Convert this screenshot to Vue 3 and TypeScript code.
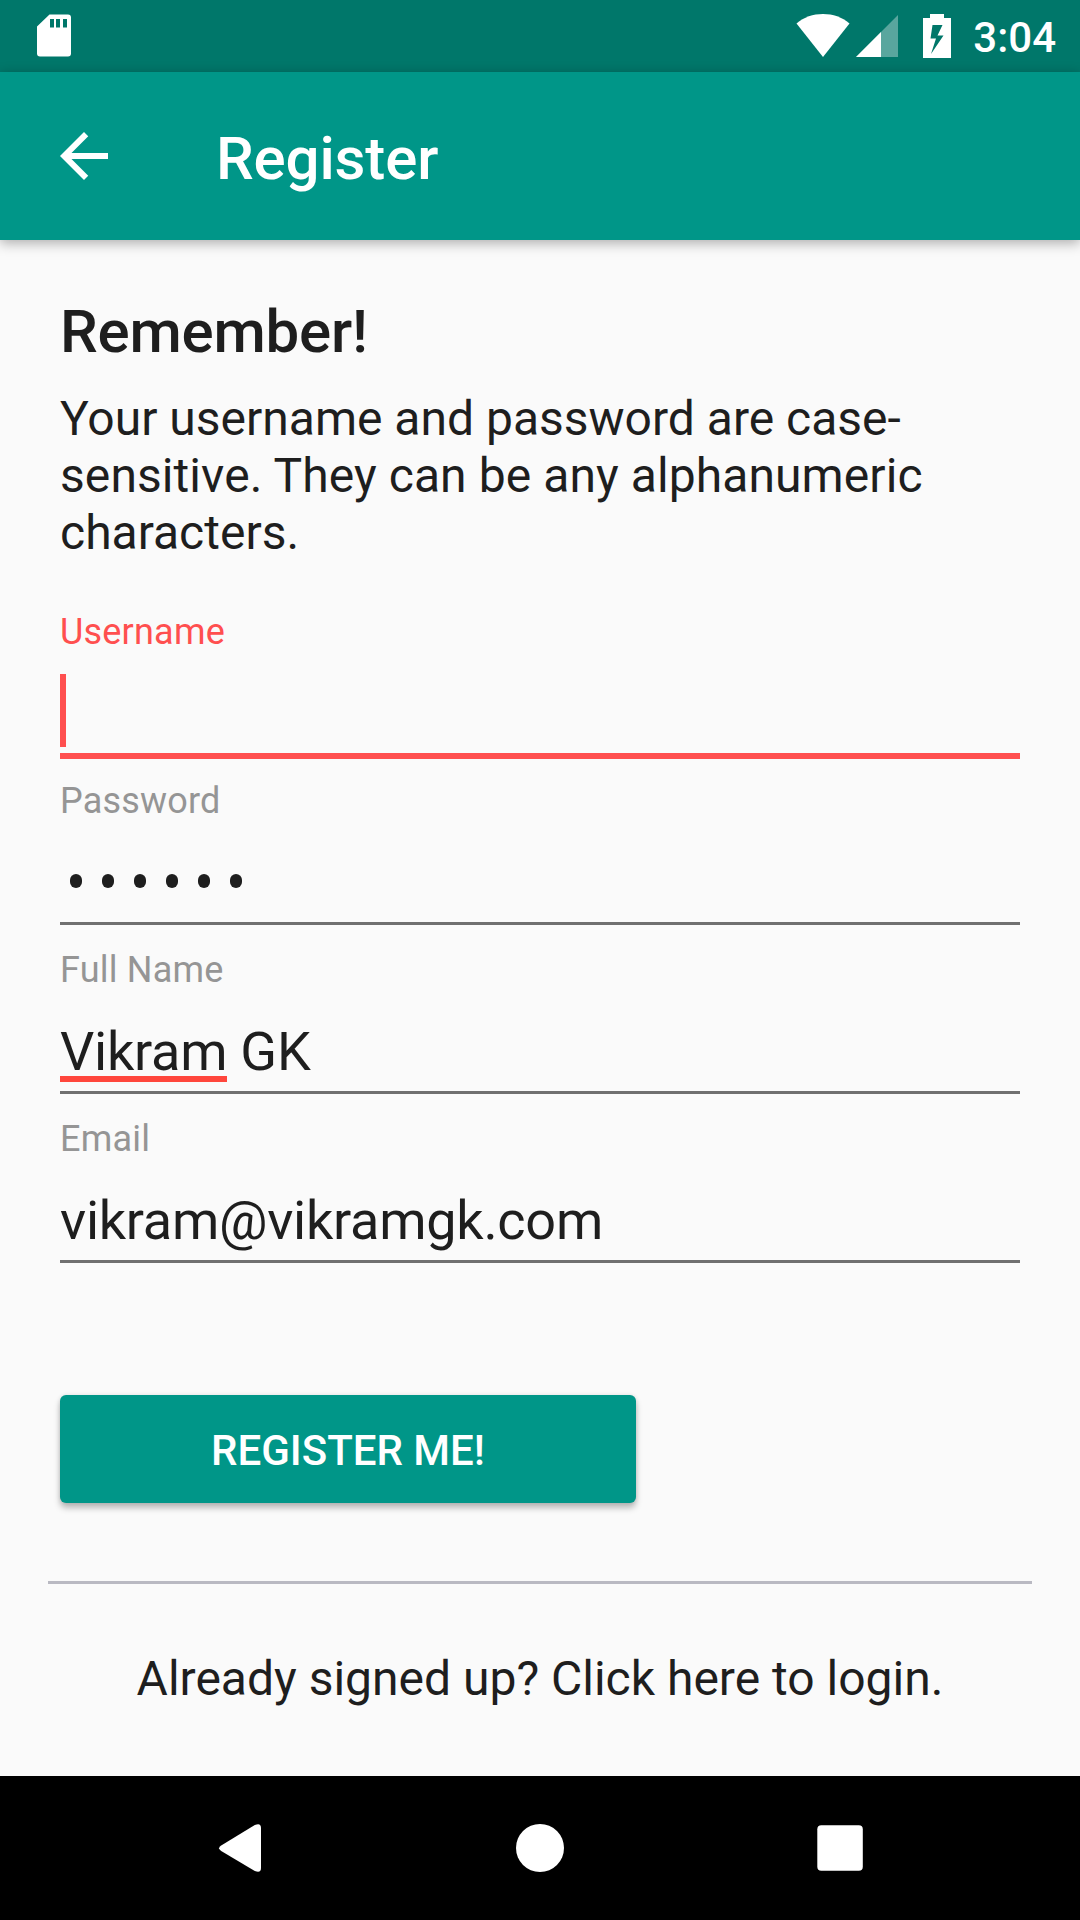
<script setup lang="ts">
import { ref } from 'vue'

interface Field {
  id: string
  label: string
  kind: 'empty' | 'password' | 'name' | 'text'
  value: string
}

const fields = ref<Field[]>([
  { id: 'username', label: 'Username', kind: 'empty', value: '' },
  { id: 'password', label: 'Password', kind: 'password', value: '123456' },
  { id: 'fullname', label: 'Full Name', kind: 'name', value: 'Vikram GK' },
  { id: 'email', label: 'Email', kind: 'text', value: 'vikram@vikramgk.com' },
])
const focused = ref('username')
</script>

<template>
  <div class="screen">
    <header class="status-bar">
      <svg class="sd" width="34" height="43" viewBox="0 0 34 43">
        <path fill="#fff" fill-rule="evenodd" d="M12.5 0.5H31Q34 .5 34 3.5V39.5Q34 42.5 31 42.5H3Q0 42.5 0 39.5V12.5ZM13 5V13.5H17V5ZM19 5V13.5H23V5ZM26 5V13.5H30V5Z" />
      </svg>
      <div class="status-right">
        <svg class="wifi" width="54" height="43" viewBox="0 0 54 43">
          <path fill="#fff" d="M0.5 9.5C8 3 17 0 27 0S46 3 53.5 9.5L27 43Z" />
        </svg>
        <svg class="signal" width="42" height="42" viewBox="0 0 42 42">
          <path fill="#fff" fill-opacity=".35" d="M42 0V42H0Z" />
          <path fill="#fff" d="M25 17V42H0Z" />
        </svg>
        <svg class="battery" width="28" height="44" viewBox="0 0 28 44">
          <path fill="#fff" fill-rule="evenodd" d="M7 0H21V4H28V44H0V4H7ZM9.5 11L7.5 24.5H13L8 40L20.5 21.5H14.5L19.5 11Z" />
        </svg>
        <span class="clock">3:04</span>
      </div>
    </header>

    <nav class="app-bar">
      <svg class="back" width="72" height="72" viewBox="0 0 24 24">
        <path fill="#fff" d="M20 11H7.83l5.59-5.59L12 4l-8 8 8 8 1.41-1.41L7.83 13H20v-2z" />
      </svg>
      <h1 class="title">Register</h1>
    </nav>

    <main class="content">
      <h2 class="heading">Remember!</h2>
      <p class="intro">Your username and password are case-<br /><span class="wide">sensitive. They can be any alphanumeric</span><br />characters.</p>

      <form class="form" @submit.prevent>
        <div v-for="f in fields" :key="f.id" class="field" :class="{ active: f.id === focused }" @click="focused = f.id">
          <label class="label">{{ f.label }}</label>
          <div class="value">
            <span v-if="f.kind === 'empty'" class="cursor"></span>
            <span v-else-if="f.kind === 'password'" class="dots">
              <i v-for="n in f.value.length" :key="n" class="dot"></i>
            </span>
            <template v-else-if="f.kind === 'name'"><span class="misspelt">{{ f.value.split(' ')[0] }}</span>&nbsp;{{ f.value.split(' ')[1] }}</template>
            <template v-else>{{ f.value }}</template>
          </div>
        </div>
        <button class="submit" type="submit">REGISTER ME!</button>
      </form>

      <div class="divider"></div>
      <p class="login">Already signed up? Click here to login.</p>
    </main>

    <footer class="nav-bar">
      <svg width="48" height="48" viewBox="0 0 48 48">
        <path fill="#fff" d="M5.2 21.6 38.8 1Q45 -1.6 45 4V44Q45 49.6 38.8 47L5.2 27Q1 24.3 5.2 21.6Z" />
      </svg>
      <svg width="48" height="48" viewBox="0 0 48 48"><circle cx="24" cy="24" r="24" fill="#fff" /></svg>
      <svg width="48" height="48" viewBox="0 0 48 48"><rect x="1.3" y="1.3" width="45.5" height="45.5" rx="4" fill="#fff" /></svg>
    </footer>
  </div>
</template>

<style>
body {
  margin: 0;
  background: #fafafa;
}
</style>

<style scoped>
.screen {
  width: 1080px;
  height: 1920px;
  display: flex;
  flex-direction: column;
  overflow: hidden;
  background: #fafafa;
  color: #1e1e1e;
  font-family: Roboto, 'Liberation Sans', sans-serif;
}
h1, h2, p {
  margin: 0;
}
svg {
  display: block;
  flex: none;
}
.status-bar {
  height: 72px;
  flex: none;
  box-sizing: border-box;
  display: flex;
  justify-content: space-between;
  align-items: flex-start;
  padding: 14px 24px 0 37px;
  background: #00776a;
}
.status-right {
  display: flex;
  align-items: flex-start;
  color: #fff;
}
.signal {
  margin: 1px 25px 0 6px;
}
.clock {
  margin: 0 0 0 22px;
  font-size: 42px;
  line-height: 48px;
  font-weight: 500;
}
.app-bar {
  height: 168px;
  flex: none;
  display: flex;
  align-items: center;
  padding-left: 48px;
  background: #009688;
  color: #fff;
  position: relative;
  box-shadow: 0 3px 12px rgba(0, 0, 0, 0.32);
}
.title {
  margin: 5px 0 0 96px;
  font-size: 60px;
  line-height: 70px;
  font-weight: 500;
  letter-spacing: -0.15px;
}
.content {
  flex: 1;
  padding: 57px 60px 0;
}
.heading {
  font-size: 60px;
  line-height: 70px;
  font-weight: 500;
  letter-spacing: -0.2px;
}
.intro {
  margin-top: 23px;
  font-size: 48px;
  line-height: 57px;
  white-space: nowrap;
}
.wide {
  letter-spacing: 0.08px;
}
.form {
  margin-top: 50px;
}
.field {
  height: 169px;
}
.label {
  display: block;
  font-size: 36px;
  line-height: 42px;
  letter-spacing: 0.2px;
  color: #959595;
}
.value {
  height: 71px;
  padding-top: 29px;
  border-bottom: 3px solid #707070;
  font-size: 54px;
  line-height: 63px;
  letter-spacing: -0.27px;
  white-space: nowrap;
}
.active .label {
  color: #ff4f4f;
}
.active .value {
  border-bottom: 6px solid #ff4f4f;
}
.cursor {
  display: block;
  width: 6px;
  height: 73px;
  margin-top: -8px;
  background: #ff4f4f;
}
.dots {
  display: flex;
  gap: 20px;
  padding: 23px 0 0 10px;
}
.dot {
  width: 12px;
  height: 14px;
  border-radius: 6px;
  background: #1e1e1e;
}
.misspelt {
  display: inline-block;
  height: 56px;
  border-bottom: 6px solid #ff463c;
}
.submit {
  display: block;
  width: 576px;
  height: 108px;
  margin-top: 108px;
  padding: 2px 0 0;
  border: 0;
  border-radius: 6px;
  background: #009688;
  color: #fff;
  font-family: inherit;
  font-size: 42px;
  font-weight: 500;
  box-shadow: 0 5px 6px rgba(0, 0, 0, 0.26), 0 0 4px rgba(0, 0, 0, 0.1);
}
.divider {
  height: 3px;
  margin: 78px -12px 0;
  background: #b9b9c2;
}
.login {
  margin-top: 67px;
  font-size: 48px;
  line-height: 56px;
  text-align: center;
}
.nav-bar {
  height: 144px;
  flex: none;
  display: flex;
  align-items: center;
  justify-content: center;
  gap: 252px;
  background: #000;
}
</style>
